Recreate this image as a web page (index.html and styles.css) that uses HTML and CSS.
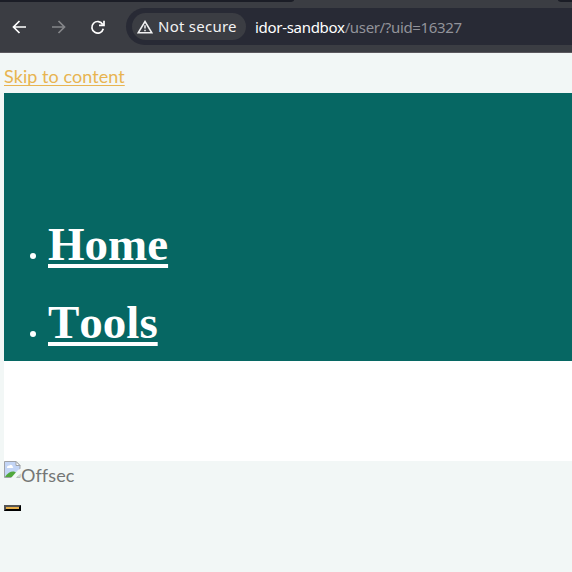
FILE: index.html
```
<!DOCTYPE html>
<html lang="en">
<head>
<meta charset="utf-8">
<title>Offsec</title>
<link rel="stylesheet" href="styles.css">
</head>
<body>
<div class="tabs"><span class="tab-left"></span><span class="tab-right"></span></div>
<div class="toolbar">
  <svg class="nav-icons" width="120" height="30" viewBox="0 0 120 30" fill="none" stroke-width="1.7">
    <path d="M26 15H13.6M19.5 9L13.5 15L19.5 21" stroke="#fff"/>
    <path class="dim" d="M52 15H64.4M58.5 9L64.5 15L58.5 21"/>
    <path d="M102.7 12.4A5.8 5.8 0 1 0 103.3 16.8M104 8.8V13.4H99" stroke="#fff"/>
  </svg>
  <div class="address">
    <div class="chip">
      <svg width="16" height="14" viewBox="0 0 16 14" fill="none" stroke="#f2f2f3" stroke-width="1.5"><path d="M8 1.5L14.8 12.8H1.2ZM8 5.3V8.6M8 9.8V11.2"/></svg>
      <span class="secure">Not secure</span>
    </div>
    <div class="url"><span class="host">idor-sandbox</span><span class="path">/user/?uid=16327</span></div>
  </div>
</div>
<main class="page">
  <div class="skip-row"><a class="skip" href="#content">Skip to content</a></div>
  <nav class="menu">
    <ul>
      <li><a href="#home">Home</a></li>
      <li><a href="#tools">Tools</a></li>
    </ul>
  </nav>
  <div class="blank"></div>
  <div class="logo">
    <svg width="17" height="17" viewBox="0 0 17 17">
      <path d="M.5 .5H12L16 4.5V16.5H.5Z" fill="#c3d5f6" stroke="#a0a3a8"/>
      <path d="M3 7C2.5 5 5 4.5 5.5 4.5C6.5 3 8.5 4 8.5 5.5C9.5 5.5 9.5 7 8.5 7Z" fill="#fff"/>
      <path d="M1 16C3 12 7 10 10 10.5C12 11 14 13 15.5 16Z" fill="#50a83d"/>
      <path d="M17 7.5L14 9L7 17H12L17 12.5Z" fill="#f2f7f6"/>
      <path d="M12 .5V4.5H16Z" fill="#fff" stroke="#a0a3a8"/>
      <path d="M12.5 16.5H16.5V13Z" fill="#d0d3d3"/>
    </svg>
    <span>Offsec</span>
  </div>
  <button class="toggle" aria-label="Menu"></button>
</main>
</body>
</html>
```
FILE: styles.css
```
* { box-sizing: border-box; }
body { margin: 0; height: 572px; overflow: hidden; background: #f2f7f6; }
.tabs { height: 2px; display: flex; justify-content: space-between; background: #3b3d43; }
.tab-left { width: 294px; background: #1b1d26; border-bottom-right-radius: 5px 2px; }
.tab-right { width: 14px; background: #1b1d26; border-bottom-left-radius: 5px 2px; }
.toolbar { height: 51px; display: flex; padding-top: 6px; background: #3b3d43; border-bottom: 1px solid #5c595f; }
.nav-icons { flex: none; margin: 4px 6px 0 0; }
.dim { stroke: #85868a; }
.address { flex: 1; height: 37px; display: flex; align-items: center; padding-left: 6px; background: #282a35; border-radius: 19px 0 0 19px; }
.chip { width: 114px; height: 27px; display: flex; align-items: center; gap: 5px; padding-left: 5px; border-radius: 14px; background: #3b3d43; }
.chip svg { flex: none; }
.secure, .url { font: 15px/22px "Noto Sans", sans-serif; white-space: nowrap; }
.secure { position: relative; top: -1px; color: #f2f2f3; letter-spacing: .25px; }
.url { margin-left: 9px; }
.host { color: #fff; letter-spacing: -.3px; }
.path { color: #92939a; letter-spacing: -.35px; }
.page { padding-left: 4px; font-family: "Open Sans", sans-serif; }
.skip-row { height: 40px; padding-top: 11px; }
.skip { display: block; width: max-content; font: 18px/24px Lato, sans-serif; letter-spacing: .06px; color: #e8b450; text-decoration-thickness: 1px; text-underline-offset: 2px; text-decoration-skip-ink: none; }
.menu { height: 268px; padding-top: 112px; background: #066763; }
.menu ul { margin: 0; padding: 0 0 0 26px; list-style: none; }
.menu li { height: 78px; display: flex; align-items: center; gap: 12px; }
.menu li::before { content: ""; width: 6px; height: 6px; margin-top: 24px; border-radius: 50%; background: #fff; }
.menu a { font: bold 47px/78px "Liberation Serif", serif; font-kerning: none; color: #fff; text-decoration-thickness: 4px; text-underline-offset: 4px; text-decoration-skip-ink: none; }
.blank { height: 100px; background: #fff; }
.logo { height: 44px; display: flex; align-items: flex-start; font: 18px/28px Lato, sans-serif; letter-spacing: .1px; color: #747675; }
.toggle { display: block; width: 17px; height: 6px; padding: 0; border: 2px outset #000; background: #e8b04a; }
```
